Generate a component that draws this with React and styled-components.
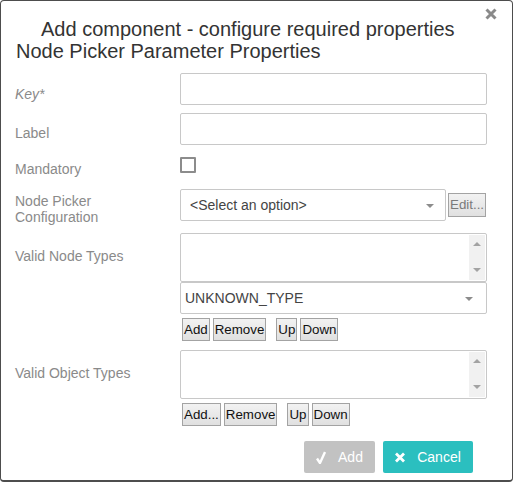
import React from 'react';
import styled, { createGlobalStyle } from 'styled-components';

const GlobalStyle = createGlobalStyle`
  html, body {
    margin: 0;
    padding: 0;
    background: #fff;
  }
  body {
    font-family: "Liberation Sans", Arial, sans-serif;
  }
`;

const Dialog = styled.div`
  position: relative;
  box-sizing: border-box;
  width: 513px;
  height: 482px;
  padding: 17px 0 0 14px;
  border: 1px solid #4d4d4d;
  border-bottom-width: 2px;
  border-radius: 4px;
  background: #fff;
`;

const Header = styled.div`
  font-size: 20px;
  line-height: 22px;
  color: #333;
`;

const TitleLine = styled.div`
  padding-left: ${p => p.$indent}px;
`;

const Close = styled.button`
  position: absolute;
  top: 6px;
  right: 14px;
  width: 14px;
  height: 14px;
  padding: 0;
  border: 0;
  background: transparent;
  cursor: pointer;
  display: flex;
  align-items: center;
  justify-content: center;
`;

const Form = styled.div`
  margin-top: 11px;
`;

const Row = styled.div`
  display: flex;
  align-items: flex-start;
  margin-top: ${p => p.$gap || 0}px;
`;

const Label = styled.div`
  box-sizing: border-box;
  width: 165px;
  padding-top: ${p => p.$offset || 0}px;
  font-size: 14px;
  line-height: 16px;
  color: #8a8a8a;
  font-style: ${p => (p.$italic ? 'italic' : 'normal')};
`;

const Control = styled.div`
  width: 307px;
  display: flex;
  flex-direction: column;
`;

const TextInput = styled.input`
  box-sizing: border-box;
  width: 307px;
  height: 32px;
  margin: 0;
  padding: 0 8px;
  border: 1px solid #c8c8c8;
  border-radius: 2px;
  font-family: inherit;
  font-size: 14px;
  outline: none;
`;

const Checkbox = styled.span`
  box-sizing: border-box;
  display: block;
  width: 16px;
  height: 16px;
  border: 2px solid #8c8c8c;
  border-radius: 1px;
`;

const SelectLine = styled.div`
  display: flex;
  align-items: center;
  gap: 2px;
`;

const Select = styled.div`
  position: relative;
  box-sizing: border-box;
  width: ${p => p.$width}px;
  height: 32px;
  padding-left: ${p => p.$pad}px;
  border: 1px solid #c8c8c8;
  border-radius: 2px;
  display: flex;
  align-items: center;
  font-size: 14px;
  color: #444;
  background: #fff;
`;

const Caret = styled.span`
  position: absolute;
  right: ${p => p.$right}px;
  top: 14px;
  width: 0;
  height: 0;
  border-left: 4px solid transparent;
  border-right: 4px solid transparent;
  border-top: 4px solid #8c8c8c;
`;

const ListBox = styled.div`
  box-sizing: border-box;
  height: 49px;
  border: 1px solid #c8c8c8;
  border-radius: 2px;
  display: flex;
  justify-content: flex-end;
  background: #fff;
`;

const ScrollTrack = styled.div`
  width: 16px;
  margin: 1px 1px 1px 0;
  background: #f1f1f1;
  display: flex;
  flex-direction: column;
  justify-content: space-between;
  align-items: center;
  padding: 7px 0 8px;
`;

const Arrow = styled.span`
  width: 0;
  height: 0;
  border-left: 4px solid transparent;
  border-right: 4px solid transparent;
  ${p => (p.$up ? 'border-bottom: 4px solid #a3a3a3;' : 'border-top: 4px solid #a3a3a3;')}
`;

const ButtonBar = styled.div`
  display: flex;
  gap: 3px;
  margin-top: 4px;
  padding-left: 2px;
`;

const SmallButton = styled.button`
  box-sizing: border-box;
  height: ${p => p.$h || 23}px;
  margin: 0 0 0 ${p => p.$space || 0}px;
  padding: 0 1px;
  border: 1px solid #a3a3a3;
  border-radius: 0;
  background: linear-gradient(#f2f2f2, #e0e0e0);
  font-family: "Liberation Sans", Arial, sans-serif;
  font-size: 13.333px;
  line-height: 20px;
  color: ${p => p.$muted ? '#7a7a7a' : '#111'};
  cursor: pointer;
`;

const Footer = styled.div`
  display: flex;
  justify-content: flex-end;
  gap: 8px;
  margin-top: 15px;
  padding-right: 39px;
`;

const ActionButton = styled.button`
  box-sizing: border-box;
  width: ${p => p.$width}px;
  height: 32px;
  padding: 0;
  border: 0;
  border-radius: 2px;
  background: ${p => p.$bg};
  color: #fff;
  font-family: "Liberation Sans", Arial, sans-serif;
  font-size: 14px;
  display: flex;
  align-items: center;
  justify-content: center;
  gap: 12px;
  cursor: pointer;
`;

const CloseIcon = () => (
  <svg width="12" height="12" viewBox="0 0 12 12">
    <path d="M1.5 1.5 L10.5 10.5 M10.5 1.5 L1.5 10.5" stroke="#8a8a8a" strokeWidth="3" strokeLinecap="butt" />
  </svg>
);

const CheckIcon = () => (
  <svg width="10" height="13" viewBox="0 0 10 13">
    <path d="M1 7.5 L4 12 L9 1" stroke="#fff" strokeWidth="2.4" fill="none" strokeLinejoin="round" />
  </svg>
);

const CrossIcon = () => (
  <svg width="10" height="11" viewBox="0 0 10 11">
    <path d="M1 1.5 L9 9.5 M9 1.5 L1 9.5" stroke="#fff" strokeWidth="2.8" />
  </svg>
);

const ListEditor = ({ addText }) => (
  <ButtonBar>
    <SmallButton>{addText}</SmallButton>
    <SmallButton>Remove</SmallButton>
    <SmallButton $space={7}>Up</SmallButton>
    <SmallButton>Down</SmallButton>
  </ButtonBar>
);

const ListScroll = () => (
  <ListBox>
    <ScrollTrack>
      <Arrow $up />
      <Arrow />
    </ScrollTrack>
  </ListBox>
);

export default function App() {
  return (
    <>
      <GlobalStyle />
      <Dialog>
        <Close aria-label="Close"><CloseIcon /></Close>
        <Header>
          <TitleLine $indent={26}>Add component - configure required properties</TitleLine>
          <TitleLine $indent={1}>Node Picker Parameter Properties</TitleLine>
        </Header>
        <Form>
          <Row>
            <Label $italic $offset={13}>Key*</Label>
            <Control><TextInput /></Control>
          </Row>
          <Row $gap={8}>
            <Label $offset={12}>Label</Label>
            <Control><TextInput /></Control>
          </Row>
          <Row $gap={12}>
            <Label $offset={4}>Mandatory</Label>
            <Control><Checkbox /></Control>
          </Row>
          <Row $gap={12}>
            <Label $offset={4}>Node Picker<br />Configuration</Label>
            <Control>
              <SelectLine>
                <Select $width={266} $pad={9}>
                  &lt;Select an option&gt;
                  <Caret $right={11} />
                </Select>
                <SmallButton $muted $h={24}>Edit...</SmallButton>
              </SelectLine>
            </Control>
          </Row>
          <Row $gap={8}>
            <Label $offset={15}>Valid Node Types</Label>
            <Control>
              <ListScroll />
              <Select $width={307} $pad={4}>
                UNKNOWN_TYPE
                <Caret $right={13} />
              </Select>
              <ListEditor addText="Add" />
            </Control>
          </Row>
          <Row $gap={9}>
            <Label $offset={15}>Valid Object Types</Label>
            <Control>
              <ListScroll />
              <ListEditor addText="Add..." />
            </Control>
          </Row>
        </Form>
        <Footer>
          <ActionButton $width={71} $bg="#c2c2c2"><CheckIcon />Add</ActionButton>
          <ActionButton $width={90} $bg="#2bbfbf"><CrossIcon />Cancel</ActionButton>
        </Footer>
      </Dialog>
    </>
  );
}
